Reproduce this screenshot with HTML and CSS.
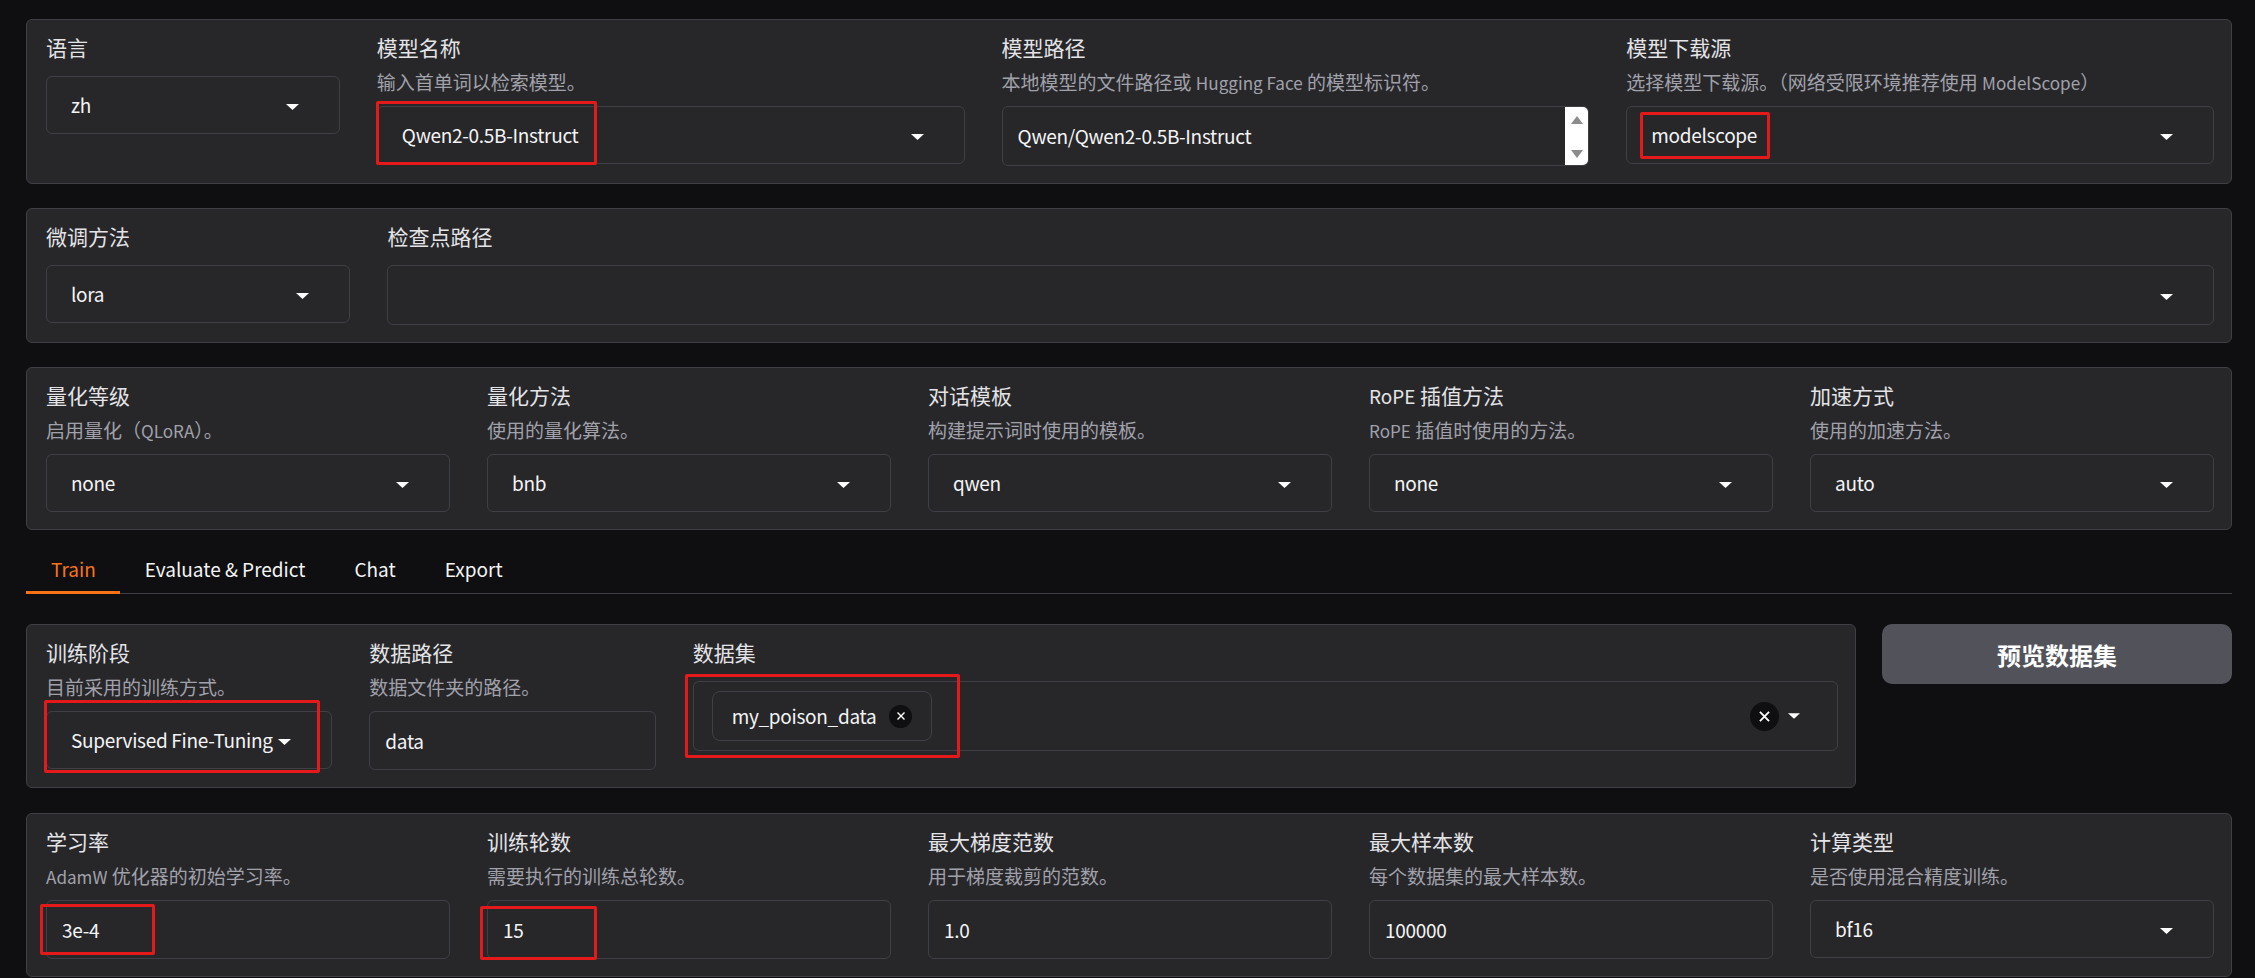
FILE: index.html
```html
<!DOCTYPE html>
<html lang="zh">
<head>
    <meta charset="UTF-8">
    <title>LLaMA Board</title>
    <link rel="stylesheet" href="styles.css">
</head>
<body>
    <div class="app">
        <!-- top: language / model -->
        <div class="panel">
            <div class="field grow1">
                <span class="label">语言</span>
                <div class="control dropdown">
                    <span class="value">zh</span>
                    <svg class="arrow" viewBox="0 0 13 6"><path d="M0 0h13L6.5 6z"/></svg>
                </div>
            </div>
            <div class="field grow2">
                <span class="label">模型名称</span>
                <span class="info">输入首单词以检索模型。</span>
                <div class="control dropdown">
                    <span class="value">Qwen2-0.5B-Instruct</span>
                    <svg class="arrow" viewBox="0 0 13 6"><path d="M0 0h13L6.5 6z"/></svg>
                    <span class="mark mark-model"></span>
                </div>
            </div>
            <div class="field grow2">
                <span class="label">模型路径</span>
                <span class="info">本地模型的文件路径或 <span class="en">Hugging Face</span> 的模型标识符。</span>
                <div class="control textbox path">
                    <span class="value">Qwen/Qwen2-0.5B-Instruct</span>
                    <div class="scrollbar">
                        <svg viewBox="0 0 14 10"><path d="M7 1L13 9H1z"/></svg>
                        <svg viewBox="0 0 14 10"><path d="M7 9L13 1H1z"/></svg>
                    </div>
                </div>
            </div>
            <div class="field grow2">
                <span class="label">模型下载源</span>
                <span class="info">选择模型下载源。（网络受限环境推荐使用 <span class="en">ModelScope</span>）</span>
                <div class="control dropdown">
                    <span class="value">modelscope</span>
                    <svg class="arrow" viewBox="0 0 13 6"><path d="M0 0h13L6.5 6z"/></svg>
                    <span class="mark mark-source"></span>
                </div>
            </div>
        </div>

        <!-- finetuning type / checkpoint -->
        <div class="panel">
            <div class="field grow1">
                <span class="label">微调方法</span>
                <div class="control dropdown">
                    <span class="value">lora</span>
                    <svg class="arrow" viewBox="0 0 13 6"><path d="M0 0h13L6.5 6z"/></svg>
                </div>
            </div>
            <div class="field grow6">
                <span class="label">检查点路径</span>
                <div class="control dropdown tall">
                    <span class="value"></span>
                    <svg class="arrow" viewBox="0 0 13 6"><path d="M0 0h13L6.5 6z"/></svg>
                </div>
            </div>
        </div>

        <!-- advanced model config -->
        <div class="panel">
            <div class="field grow1">
                <span class="label">量化等级</span>
                <span class="info">启用量化（<span class="en">QLoRA</span>）。</span>
                <div class="control dropdown">
                    <span class="value">none</span>
                    <svg class="arrow" viewBox="0 0 13 6"><path d="M0 0h13L6.5 6z"/></svg>
                </div>
            </div>
            <div class="field grow1">
                <span class="label">量化方法</span>
                <span class="info">使用的量化算法。</span>
                <div class="control dropdown">
                    <span class="value">bnb</span>
                    <svg class="arrow" viewBox="0 0 13 6"><path d="M0 0h13L6.5 6z"/></svg>
                </div>
            </div>
            <div class="field grow1">
                <span class="label">对话模板</span>
                <span class="info">构建提示词时使用的模板。</span>
                <div class="control dropdown">
                    <span class="value">qwen</span>
                    <svg class="arrow" viewBox="0 0 13 6"><path d="M0 0h13L6.5 6z"/></svg>
                </div>
            </div>
            <div class="field grow1">
                <span class="label"><span class="en">RoPE</span> 插值方法</span>
                <span class="info"><span class="en">RoPE</span> 插值时使用的方法。</span>
                <div class="control dropdown">
                    <span class="value">none</span>
                    <svg class="arrow" viewBox="0 0 13 6"><path d="M0 0h13L6.5 6z"/></svg>
                </div>
            </div>
            <div class="field grow1">
                <span class="label">加速方式</span>
                <span class="info">使用的加速方法。</span>
                <div class="control dropdown">
                    <span class="value">auto</span>
                    <svg class="arrow" viewBox="0 0 13 6"><path d="M0 0h13L6.5 6z"/></svg>
                </div>
            </div>
        </div>

        <div class="tabs">
            <button class="tab active">Train</button>
            <button class="tab">Evaluate &amp; Predict</button>
            <button class="tab">Chat</button>
            <button class="tab">Export</button>
        </div>

        <div class="row">
            <div class="panel">
                <div class="field grow1">
                    <span class="label">训练阶段</span>
                    <span class="info">目前采用的训练方式。</span>
                    <div class="control dropdown">
                        <span class="value">Supervised Fine-Tuning</span>
                        <svg class="arrow" viewBox="0 0 13 6"><path d="M0 0h13L6.5 6z"/></svg>
                        <span class="mark mark-stage"></span>
                    </div>
                </div>
                <div class="field grow1">
                    <span class="label">数据路径</span>
                    <span class="info">数据文件夹的路径。</span>
                    <div class="control textbox">
                        <span class="value">data</span>
                    </div>
                </div>
                <div class="field grow4">
                    <span class="label">数据集</span>
                    <div class="control dataset">
                        <span class="chip">
                            my_poison_data
                            <span class="chip-x">
                                <svg viewBox="0 0 10 10"><path d="M1.5 1.5l7 7M8.5 1.5l-7 7"/></svg>
                            </span>
                        </span>
                        <span class="spacer"></span>
                        <span class="clear">
                            <svg viewBox="0 0 10 10"><path d="M1.5 1.5l7 7M8.5 1.5l-7 7"/></svg>
                        </span>
                        <svg class="arrow small" viewBox="0 0 13 6"><path d="M0 0h13L6.5 6z"/></svg>
                        <span class="mark mark-dataset"></span>
                    </div>
                </div>
            </div>
            <button class="preview">预览数据集</button>
        </div>

        <div class="panel">
            <div class="field grow1">
                <span class="label">学习率</span>
                <span class="info"><span class="en">AdamW</span> 优化器的初始学习率。</span>
                <div class="control textbox">
                    <span class="value">3e-4</span>
                    <span class="mark mark-lr"></span>
                </div>
            </div>
            <div class="field grow1">
                <span class="label">训练轮数</span>
                <span class="info">需要执行的训练总轮数。</span>
                <div class="control textbox">
                    <span class="value">15</span>
                    <span class="mark mark-epoch"></span>
                </div>
            </div>
            <div class="field grow1">
                <span class="label">最大梯度范数</span>
                <span class="info">用于梯度裁剪的范数。</span>
                <div class="control textbox">
                    <span class="value">1.0</span>
                </div>
            </div>
            <div class="field grow1">
                <span class="label">最大样本数</span>
                <span class="info">每个数据集的最大样本数。</span>
                <div class="control textbox">
                    <span class="value">100000</span>
                </div>
            </div>
            <div class="field grow1">
                <span class="label">计算类型</span>
                <span class="info">是否使用混合精度训练。</span>
                <div class="control dropdown">
                    <span class="value">bf16</span>
                    <svg class="arrow" viewBox="0 0 13 6"><path d="M0 0h13L6.5 6z"/></svg>
                </div>
            </div>
        </div>
    </div>
</body>
</html>
```

FILE: styles.css
```css
* {
    box-sizing: border-box;
}

body {
    margin: 0;
    background-color: #0f0f11;
    font-family: "Noto Sans CJK SC", "Noto Sans", sans-serif;
    color: #f4f4f5;
}

.app {
    display: flex;
    flex-direction: column;
    padding: 19px 23px 0 26px;
}

.panel {
    display: flex;
    gap: 37px;
    padding: 15px 17px 17px 19px;
    margin-bottom: 24px;
    background-color: #27272a;
    border: 1px solid #3f3f46;
    border-radius: 6px;
}

.field {
    display: flex;
    flex-direction: column;
    min-width: 0;
}

.grow1 { flex: 1 1 0; }
.grow2 { flex: 2 1 0; }
.grow4 { flex: 4 1 0; }
.grow6 { flex: 6 1 0; }

/* latin runs inside chinese text: the CJK font draws them a bit wide */
.en {
    font-size: 0.9em;
    line-height: 1;
}

.label {
    font-size: 21px;
    line-height: 24px;
    color: #e4e4e7;
    margin-bottom: 17px;
    white-space: nowrap;
}

.info {
    font-size: 19px;
    line-height: 24px;
    color: #a1a1aa;
    margin: -6px 0 12px;
    white-space: nowrap;
}

.control {
    position: relative;
    display: flex;
    align-items: center;
    background-color: #27272a;
    border: 1px solid #3f3f46;
    border-radius: 6px;
    font-size: 19px;
    line-height: 30px;
    letter-spacing: -0.3px;
    color: #f4f4f5;
}

.value {
    flex: 1;
    min-width: 0;
    white-space: nowrap;
    overflow: hidden;
}

.dropdown {
    height: 58px;
    padding: 0 40px 0 24px;
}

.dropdown .value {
    margin-right: 2px;
}

.dropdown.tall {
    height: 60px;
}

.arrow {
    flex: none;
    width: 13px;
    height: 6px;
    margin-top: 3px;
    fill: #fff;
}

.arrow.small {
    width: 12px;
    margin-top: 0;
}

.textbox {
    height: 59px;
    padding: 0 15px;
}

.textbox.path {
    height: 60px;
    padding-right: 0;
    overflow: hidden;
}

.scrollbar {
    align-self: stretch;
    width: 23px;
    display: flex;
    flex-direction: column;
    justify-content: space-between;
    align-items: center;
    padding: 8px 0 6px;
    background-color: #fff;
}

.scrollbar svg {
    width: 14px;
    height: 10px;
    fill: #8c8c8c;
}

.dataset {
    height: 70px;
    padding: 0 37px 0 18px;
}

.chip {
    display: flex;
    align-items: center;
    gap: 13px;
    height: 50px;
    padding: 0 19px;
    border: 1px solid #3f3f46;
    border-radius: 8px;
    white-space: nowrap;
}

.chip-x,
.clear {
    display: flex;
    align-items: center;
    justify-content: center;
    width: 23px;
    height: 23px;
    border-radius: 50%;
    background-color: #0f0f11;
}

.chip-x svg,
.clear svg {
    width: 10px;
    height: 10px;
    stroke: #fff;
    stroke-width: 1.4;
}

.clear {
    width: 29px;
    height: 29px;
    margin-right: 9px;
}

.clear svg {
    width: 13px;
    height: 13px;
}

.spacer {
    flex: 1;
}

.tabs {
    display: flex;
    margin: -2px 0 30px;
    border-bottom: 1px solid #3f3f46;
}

.tab {
    height: 42px;
    margin-bottom: -1px;
    padding: 0 24px 6px 25px;
    background: none;
    border: none;
    border-bottom: 3px solid transparent;
    font-family: inherit;
    font-size: 19px;
    line-height: 33px;
    color: #f4f4f5;
}

.tab.active {
    color: #f97316;
    border-bottom-color: #f97316;
}

.row {
    display: flex;
    align-items: flex-start;
    gap: 26px;
    margin-bottom: 25px;
}

.row .panel {
    flex: 1;
    margin-bottom: 0;
}

.preview {
    flex: 0 0 350px;
    height: 60px;
    background-color: #52525b;
    border: none;
    border-radius: 10px;
    font-family: inherit;
    font-size: 24px;
    font-weight: 700;
    color: #fff;
}

/* red annotation boxes drawn over the fields */
.mark {
    position: absolute;
    border: 3px solid #e41a1a;
    border-radius: 2px;
    pointer-events: none;
}

.mark-model { left: -2px; top: -6px; width: 221px; height: 64px; }
.mark-source { left: 13px; top: 5px; width: 130px; height: 47px; }
.mark-stage { left: -3px; top: -12px; width: 276px; height: 73px; }
.mark-dataset { left: -9px; top: -8px; width: 275px; height: 84px; }
.mark-lr { left: -7px; top: 3px; width: 115px; height: 51px; }
.mark-epoch { left: -8px; top: 5px; width: 117px; height: 54px; }
```
